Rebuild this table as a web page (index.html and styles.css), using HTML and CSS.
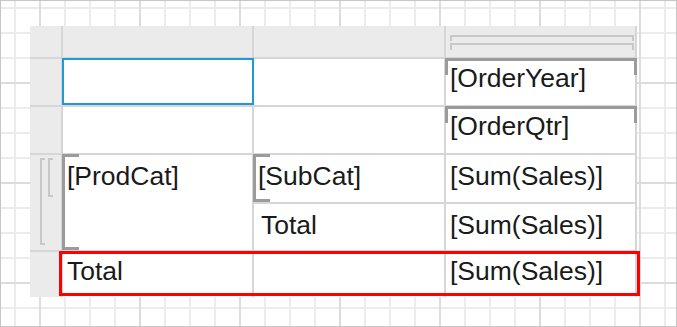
FILE: index.html
```html
<!DOCTYPE html>
<html>
<head>
<meta charset="utf-8">
<link rel="stylesheet" href="styles.css">
</head>
<body>
<div class="canvas">
  <div class="xtab">
    <div class="cell hdr"></div>
    <div class="cell hdr"></div>
    <div class="cell hdr"></div>
    <div class="cell hdr colgroup"><span class="cbr"></span><span class="cbr long"></span></div>

    <div class="cell rh"></div>
    <div class="cell body selected"></div>
    <div class="cell body"></div>
    <div class="cell body txt grp-top">[OrderYear]</div>

    <div class="cell rh"></div>
    <div class="cell body"></div>
    <div class="cell body"></div>
    <div class="cell body txt grp-top">[OrderQtr]</div>

    <div class="cell rh rowgroup span2"><span class="rb outer"></span><span class="rb inner"></span></div>
    <div class="cell body txt low grp-left span2">[ProdCat]</div>
    <div class="cell body txt low grp-left">[SubCat]</div>
    <div class="cell body txt low">[Sum(Sales)]</div>
    <div class="cell body txt low indent">Total</div>
    <div class="cell body txt low">[Sum(Sales)]</div>

    <div class="cell rh"></div>
    <div class="cell body txt">Total</div>
    <div class="cell body"></div>
    <div class="cell body txt">[Sum(Sales)]</div>

    <div class="total-highlight"></div>
  </div>
</div>
</body>
</html>
```
FILE: styles.css
```css
* { box-sizing: border-box; }
html, body { margin: 0; padding: 0; background: #fff; }
.canvas {
  width: 677px;
  height: 327px;
  border: 1px solid #c6c6c6;
  padding: 25px 0 0 29px;
  background-color: #fff;
  background-image:
    linear-gradient(to right, #dcdcdc 2px, transparent 2px),
    linear-gradient(to bottom, #dcdcdc 2px, transparent 2px),
    linear-gradient(to right, #ececec 2px, transparent 2px),
    linear-gradient(to bottom, #ececec 2px, transparent 2px);
  background-size: 100px 100px, 100px 100px, 25px 25px, 25px 25px;
  background-position: 38px 0, 0 81px, 13px 0, 0 6px;
  overflow: hidden;
}
.xtab {
  position: relative;
  display: grid;
  width: 607px;
  grid-template-columns: 31px 189px 190px 189px;
  grid-template-rows: 31px 46px 46px 47px 46px 45px;
  gap: 2px;
  padding-right: 2px;
  background: #d6d6d6;
  font-family: "Liberation Sans", Arial, sans-serif;
  font-size: 26.5px;
  line-height: 30px;
  color: #1a1a1a;
}
.cell { position: relative; }
.hdr, .rh { background: #ebebeb; }
.body { background: #fff; }
.span2 { grid-row: span 2; }
.txt { padding: 4px 4px 0 4px; white-space: nowrap; }
.txt.low { padding-top: 6px; }
.txt.indent { padding-left: 7px; }

.colgroup {
  display: flex;
  flex-direction: column;
  gap: 2px;
  padding: 9px 1px 0 4px;
}
.cbr {
  display: block;
  height: 6px;
  border: 2px solid #c8c8c8;
  border-bottom: none;
}
.cbr.long { height: 7px; }

.rowgroup {
  display: flex;
  align-items: flex-start;
  gap: 3px;
  padding: 3px 0 5px 10px;
}
.rb {
  display: block;
  width: 5px;
  border: 2px solid #c8c8c8;
  border-right: none;
}
.rb.outer { align-self: stretch; }
.rb.inner { height: 39px; }

.grp-top::before {
  content: "";
  position: absolute;
  top: -1px;
  left: -1px;
  right: -2px;
  height: 14px;
  border: 3px solid #9b9b9b;
  border-bottom: none;
}
.grp-left::before {
  content: "";
  position: absolute;
  top: -1px;
  left: -1px;
  bottom: 0;
  width: 14px;
  border: 3px solid #9b9b9b;
  border-right: none;
}
.selected::after {
  content: "";
  position: absolute;
  top: -1px;
  left: -1px;
  right: -2px;
  bottom: 0;
  border: 2px solid #1e9bd7;
}
.total-highlight {
  position: absolute;
  left: 29px;
  top: 225px;
  width: 581px;
  height: 45px;
  border: 3px solid #ff0000;
}
```
